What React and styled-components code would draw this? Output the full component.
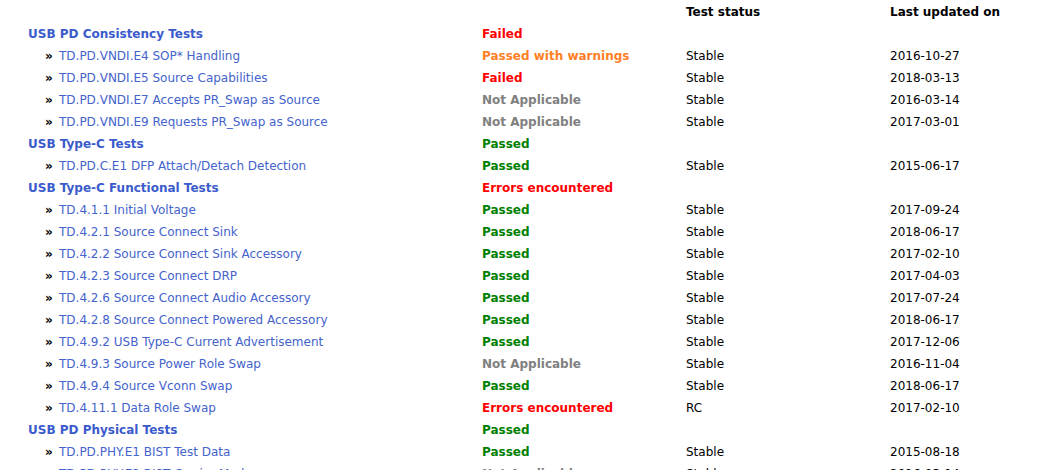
import styled, { createGlobalStyle } from "styled-components";

const GlobalStyle = createGlobalStyle`
	body {
		margin: 0;
		background: #ffffff;
		font-family: "DejaVu Sans", Verdana, sans-serif;
		font-size: 12px;
		color: #000000;
	}
`;

const statusColors = {
	Passed: "#008000",
	Failed: "#ff0000",
	"Errors encountered": "#ff0000",
	"Passed with warnings": "#ff7f27",
	"Not Applicable": "#808080",
};

const groups = [
	{
		name: "USB PD Consistency Tests",
		status: "Failed",
		tests: [
			["TD.PD.VNDI.E4 SOP* Handling", "Passed with warnings", "Stable", "2016-10-27"],
			["TD.PD.VNDI.E5 Source Capabilities", "Failed", "Stable", "2018-03-13"],
			["TD.PD.VNDI.E7 Accepts PR_Swap as Source", "Not Applicable", "Stable", "2016-03-14"],
			["TD.PD.VNDI.E9 Requests PR_Swap as Source", "Not Applicable", "Stable", "2017-03-01"],
		],
	},
	{
		name: "USB Type-C Tests",
		status: "Passed",
		tests: [["TD.PD.C.E1 DFP Attach/Detach Detection", "Passed", "Stable", "2015-06-17"]],
	},
	{
		name: "USB Type-C Functional Tests",
		status: "Errors encountered",
		tests: [
			["TD.4.1.1 Initial Voltage", "Passed", "Stable", "2017-09-24"],
			["TD.4.2.1 Source Connect Sink", "Passed", "Stable", "2018-06-17"],
			["TD.4.2.2 Source Connect Sink Accessory", "Passed", "Stable", "2017-02-10"],
			["TD.4.2.3 Source Connect DRP", "Passed", "Stable", "2017-04-03"],
			["TD.4.2.6 Source Connect Audio Accessory", "Passed", "Stable", "2017-07-24"],
			["TD.4.2.8 Source Connect Powered Accessory", "Passed", "Stable", "2018-06-17"],
			["TD.4.9.2 USB Type-C Current Advertisement", "Passed", "Stable", "2017-12-06"],
			["TD.4.9.3 Source Power Role Swap", "Not Applicable", "Stable", "2016-11-04"],
			["TD.4.9.4 Source Vconn Swap", "Passed", "Stable", "2018-06-17"],
			["TD.4.11.1 Data Role Swap", "Errors encountered", "RC", "2017-02-10"],
		],
	},
	{
		name: "USB PD Physical Tests",
		status: "Passed",
		tests: [
			["TD.PD.PHY.E1 BIST Test Data", "Passed", "Stable", "2015-08-18"],
			["TD.PD.PHY.E2 BIST Carrier Mode", "Not Applicable", "Stable", "2016-03-14"],
		],
	},
];

const App = () => {
	return (
		<>
			<GlobalStyle />
			<Table>
				<Row>
					<Cell />
					<Cell />
					<HeadCell>Test status</HeadCell>
					<HeadCell>Last updated on</HeadCell>
				</Row>
				{groups.map((group) => (
					<Group key={group.name}>
						<Row>
							<NameCell $indent={28}>
								<GroupLink>{group.name}</GroupLink>
							</NameCell>
							<Status $color={statusColors[group.status]}>{group.status}</Status>
							<Cell />
							<Cell />
						</Row>
						{group.tests.map(([name, status, stage, date]) => (
							<Row key={name}>
								<NameCell $indent={45}>
									<Bullet>»</Bullet>
									<TestLink>{name}</TestLink>
								</NameCell>
								<Status $color={statusColors[status]}>{status}</Status>
								<Cell>{stage}</Cell>
								<Cell>{date}</Cell>
							</Row>
						))}
					</Group>
				))}
			</Table>
		</>
	);
};

const Table = styled.div`
	display: flex;
	flex-direction: column;
	width: 100%;
	padding-top: 1px;
`;

const Group = styled.div`
	display: contents;
`;

const Row = styled.div`
	display: grid;
	grid-template-columns: 482px 204px 204px 1fr;
	height: 22px;
	align-items: center;
	white-space: nowrap;
`;

const Cell = styled.div`
	line-height: 22px;
`;

const HeadCell = styled(Cell)`
	font-weight: bold;
`;

const NameCell = styled(Cell)`
	padding-left: ${(props) => props.$indent}px;
	display: flex;
	align-items: center;
`;

const GroupLink = styled.span`
	color: #3a5bcc;
	font-weight: bold;
`;

const Bullet = styled.span`
	font-weight: bold;
	width: 14px;
	font-size: 12px;
`;

const TestLink = styled.span`
	color: #4463cc;
`;

const Status = styled(Cell)`
	color: ${(props) => props.$color};
	font-weight: bold;
`;

export default App;
